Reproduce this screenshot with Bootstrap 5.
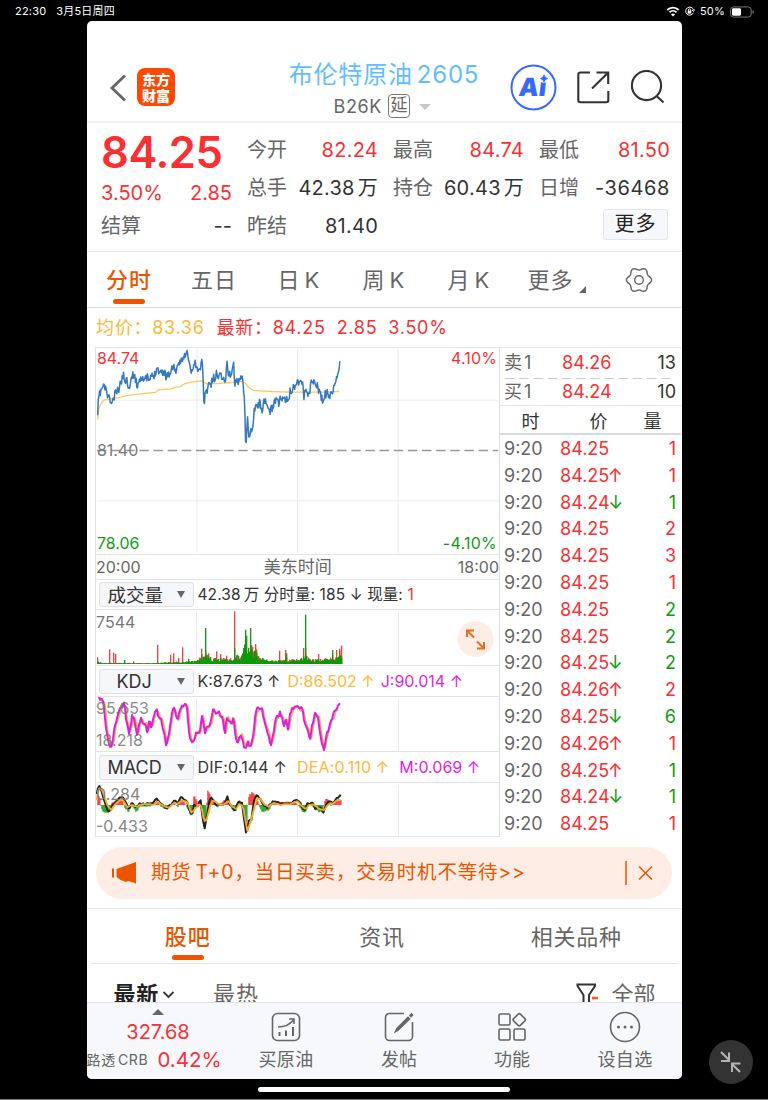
<!DOCTYPE html>
<html lang="zh-CN">
<head>
<meta charset="utf-8">
<meta name="viewport" content="width=device-width, initial-scale=1">
<title>布伦特原油2605</title>
<link href="https://cdn.jsdelivr.net/npm/bootstrap@5.3.0/dist/css/bootstrap.min.css" rel="stylesheet">
<style>
  :root{--up:#fa2f32;--down:#109c10;--org:#ec5500;--avg:#ffb739;--gr:#666;--ln:#e3e4e9}
  body{background:#000;font-family:Inter,"Noto Sans CJK SC",sans-serif;color:#333;height:1100px;overflow:hidden;line-height:1.2;border-bottom:1px solid #777}
  svg{display:block;flex:none}
  .up{color:var(--up)}.down{color:var(--down)}.gr{color:var(--gr)}.avg{color:var(--avg)}.mag{color:#e11fe1}.org{color:var(--org)}
  .status-row{height:21px;font-size:11px;color:#fff;padding:2px 14px 0 15px}
  .phone{width:595px;height:1058px;margin-left:86.5px;background:#fff;border-radius:5px;overflow:hidden}
  .top-bar{height:102px;padding-top:30px;border-bottom:2px solid #f1f1f2;display:grid;grid-template-columns:185px 1fr 185px}
  .app-logo{width:38px;height:38px;border-radius:8px;background:#ff4800;color:#fff;font:900 14px/16px "Noto Sans CJK SC",sans-serif;text-align:center;padding-top:3px}
  .title{font-size:24px;line-height:30px;color:#62bdff;letter-spacing:.8px;white-space:nowrap}
  .delay{width:22px;height:24px;border:1px solid #777;border-radius:4px;font-size:17px;line-height:21px;text-align:center}
  .tri{width:0;height:0;border:6px solid transparent;border-top-color:#c8c8c8;border-bottom:0}
  .quote{height:129px;padding:8px 12px 0 14.5px;border-bottom:1px solid var(--ln);display:grid;grid-template-columns:repeat(4,131px);column-gap:15px;grid-template-rows:repeat(3,38px);font-size:20px}
  .quote>div{display:flex;justify-content:space-between;align-items:center;white-space:nowrap}
  .quote .figs{letter-spacing:.25px}
  .quote .big{font-size:43.5px;font-weight:600;letter-spacing:-.45px;padding-top:5px}
  .more-btn{width:65px;height:31px;margin:-4px 2px 0 0;border:1px solid #e3e5ea;border-radius:3px;background:#f7f8fb;padding:0;font-size:20px;line-height:28px;color:#222;letter-spacing:1px}
  .tabs{height:56px;border-bottom:1px solid #dcdde4;font-size:22px;letter-spacing:1px}
  .tabs>div{width:85px;text-align:center;line-height:56px;height:56px;position:relative}
  .on{color:var(--org);font-weight:500}
  .on::after{content:"";position:absolute;left:50%;margin-left:-16px;width:32px;height:5px;border-radius:3px;background:var(--org);bottom:4px}
  .board .on::after{bottom:3px}
  .legend-row{height:39px;padding-left:9.5px;font-size:18px;letter-spacing:.72px;white-space:pre}
  .market{margin-left:8.5px;height:490px}
  .lcol{width:404px;border-left:1px solid var(--ln);border-top:1px solid var(--ln)}
  .lcol>*{border-bottom:1px solid var(--ln)}
  .lcol svg text{font-size:16px}
  .pick{width:95px;height:25px;border:1px solid #dfe1e7;border-radius:3px;background:#f6f7fa;font-size:18px;margin-left:2.5px;padding:0 8px;color:#333}
  .pick span{padding-top:2px}
  .pick i{width:0;height:0;border:4.5px solid transparent;border-top:7px solid #666;border-bottom:0}
  .ind{font-size:16px;white-space:pre;padding-top:2px}
  .rcol{width:182px;border-left:1px solid #dcdee5;border-top:1px solid var(--ln);font-size:18px}
  .tick{height:26.8px;display:grid;grid-template-columns:56px 78px 1fr;align-items:center;padding:1px 5px 0 4px;white-space:nowrap}
  .tick>:last-child,.lvl>:last-child{text-align:right}
  .lvl{height:30px;display:grid;grid-template-columns:58px 78px 1fr;align-items:center;padding:0 5px 0 4px}
  .banner{margin:10px 10px 9px 9.5px;height:52px;border-radius:26px;background:#feede5;color:var(--org);font-size:19.5px;letter-spacing:.8px;padding:0 18px 0 16px;white-space:nowrap}
  .board{margin:0 4px;height:55px;border-bottom:1px solid var(--ln);font-size:22px;letter-spacing:.8px}
  .board>div{flex:1;text-align:center;line-height:57px;position:relative}
  .sort-row{height:38px;overflow:hidden;padding:13px 26px 0 27px;font-size:22px;line-height:34px}
  .foot{height:78px;background:#f7f8fb;border-top:1px solid #e1e2e8;font-size:18px;color:#666}
  .foot>div{width:113px;text-align:center;white-space:nowrap}
  .home{width:252px;height:5px;border-radius:3px;background:#fff;margin:8px 0 0 258px}
  .shrink{position:absolute;left:709px;top:1040px}
</style>
</head>
<body>
<div class="status-row d-flex justify-content-between align-items-center">
  <div style="letter-spacing:.2px">22:30 &nbsp; 3月5日周四</div>
  <div class="d-flex align-items-center">
    <svg width="14" height="11" viewBox="0 0 14 11" fill="none" stroke="#fff" stroke-width="1.8"><path d="M1.3 4a8.2 8.2 0 0 1 11.4 0M3.5 6.3a5 5 0 0 1 7 0"/><path d="M7 10.5 5 8.5a2.8 2.8 0 0 1 4 0z" fill="#fff" stroke="none"/></svg>
    <svg class="ms-1" width="11" height="11" viewBox="0 0 11 11" fill="none" stroke="#fff"><path d="M9.3 6.8A4 4 0 1 1 9.5 4M10.6 3.5 9.4 5.5 7.9 4"/><rect x="3.7" y="4.8" width="3.6" height="2.8" fill="#fff" stroke="none"/><path d="M4.4 5V4a1.1 1.1 0 0 1 2.2 0v1"/></svg>
    <span style="margin:0 5px 0 5px;letter-spacing:.2px">50%</span>
    <svg width="24" height="12" viewBox="0 0 24 12"><rect x=".6" y=".9" width="20.6" height="10.2" rx="3" fill="none" stroke="#777"/><rect x="2" y="2.3" width="9" height="7.4" rx="1.4" fill="#fff"/><path d="M22.5 4v4q1.3-.6 1.3-2t-1.3-2" fill="#777"/></svg>
  </div>
</div>

<main class="phone">
  <header class="top-bar">
    <div class="d-flex align-items-center" style="padding-left:22px">
      <svg style="margin-top:3px" width="18" height="30" viewBox="0 0 18 30" fill="none" stroke="#666" stroke-width="2.8"><path d="M16 2.500 3 15l13 12.500"/></svg>
      <div class="app-logo ms-auto" style="margin-right:96.500px;margin-top:1px">东方<br>财富</div>
    </div>
    <div class="text-center" style="padding-top:9px">
      <div class="title">布伦特原油<span class="ms-1">2605</span></div>
      <div class="d-flex align-items-center gr" style="font-size:18px;padding:4px 0 0 62px"><span style="letter-spacing:.6px;padding-top:2px">B26K</span><span class="delay" style="margin-left:6px">延</span><i class="tri" style="margin-left:9px;margin-top:2px"></i></div>
    </div>
    <div class="d-flex align-items-center" style="padding:2px 0 0 13px">
      <svg width="47" height="47" viewBox="0 0 47 47"><circle cx="23.5" cy="23.5" r="22" fill="none" stroke="#3768ff" stroke-width="2"/><g transform="skewX(-7)"><text x="12 32" y="32.500" font-size="25" font-weight="900" fill="#3768ff">Ai</text></g><circle cx="34" cy="14" r="4.800" fill="#fff"/><path d="m34 10.800 1.200 2.500 2.500 1.200-2.500 1.200-1.200 2.500-1.200-2.500-2.500-1.200 2.500-1.200z" fill="#3768ff" stroke="#3768ff" stroke-width=".8"/></svg>
      <svg style="margin-left:19.500px" width="34" height="34" viewBox="0 0 34 34" fill="none" stroke="#333" stroke-width="2.1"><path d="M14 2.5H4.300a2 2 0 0 0-2 2v25.700a2 2 0 0 0 2 2h26a2 2 0 0 0 2-2V21M20.500 2.500h11.700v11.500M32 2.700 16 18.500"/></svg>
      <svg style="margin-left:20px" width="36" height="34" viewBox="0 0 36 34" fill="none" stroke="#333" stroke-width="2.1"><circle cx="16.500" cy="15.500" r="14.600"/><path d="m26.500 26 7 6.500"/></svg>
    </div>
  </header>

  <section class="quote">
    <div class="up big">84.25</div><div><span class="gr">今开</span><span class="up figs">82.24</span></div><div><span class="gr">最高</span><span class="up figs">84.74</span></div><div><span class="gr">最低</span><span class="up figs">81.50</span></div>
    <div class="up" style="padding-top:9px"><span>3.50%</span><span>2.85</span></div><div><span class="gr">总手</span><span class="figs">42.38<span style="margin-left:3px">万</span></span></div><div><span class="gr">持仓</span><span class="figs">60.43<span style="margin-left:3px">万</span></span></div><div><span class="gr">日增</span><span class="figs" style="letter-spacing:.6px">-36468</span></div>
    <div><span class="gr">结算</span><span>--</span></div><div><span class="gr">昨结</span><span class="figs">81.40</span></div><div></div><div><button class="btn more-btn ms-auto">更多</button></div>
  </section>

  <nav class="tabs d-flex gr">
    <div class="on">分时</div><div>五日</div><div>日<span style="margin-left:4px">K</span></div><div>周<span style="margin-left:4px">K</span></div><div>月<span style="margin-left:4px">K</span></div>
    <div class="d-flex align-items-center justify-content-center" style="padding-left:5px">更多<svg style="margin:18px 0 0 5px" width="7" height="7"><path d="M7 0v7H0z" fill="#666"/></svg></div>
    <div class="d-flex align-items-center justify-content-center"><svg width="28" height="28" viewBox="-14 -14 28 28" fill="none" stroke="#666" stroke-width="1.400"><path id="gear"/><circle r="4.300"/></svg></div>
  </nav>

  <div class="legend-row d-flex align-items-center"><span class="avg">均价：83.36</span><span class="up" style="margin-left:12px">最新：84.25</span><span class="up" style="margin-left:11px">2.85</span><span class="up" style="margin-left:11px">3.50%</span></div>

  <section class="market d-flex">
    <div class="lcol">
      <svg width="403" height="207" viewBox="0 1 403 207">
        <path d="M100.500 2v205M201.500 2v205M302.500 2v205M0 53.500h403M0 154.500h403" stroke="#eaebf0" fill="none"/>
        <path d="M0 104h403" stroke="#999" stroke-dasharray="9.500 4.700" stroke-width="1.300"/>
        <g transform="translate(-6 -7) scale(.33333)" fill="none" stroke-linejoin="round"><path id="avgLine" stroke="#ffc95a" stroke-width="4"/><path id="priceLine" stroke="#3478c0" stroke-width="4.500"/></g>
        <text x="0" y="17" fill="#fa2f32">84.74</text><text x="402" y="17" text-anchor="end" fill="#fa2f32" letter-spacing=".2">4.10%</text>
        <text x="0" y="109.500" fill="#777">81.40</text>
        <text x="0" y="203" fill="#109c10">78.06</text><text x="402" y="203" text-anchor="end" fill="#109c10" letter-spacing=".3">-4.10%</text>
      </svg>
      <div class="d-flex justify-content-between align-items-center gr" style="height:25px;font-size:16px;padding-top:1px"><span>20:00</span><span style="font-size:17px;margin-right:3px">美东时间</span><span>18:00</span></div>
      <div class="d-flex align-items-center" style="height:30px"><div class="pick d-flex align-items-center justify-content-between"><span style="font-size:18.500px">成交量</span><i></i></div><span class="ind" style="margin-left:4px;font-size:15.500px;letter-spacing:.1px">42.38<span style="margin-left:3px">万</span> 分时量: 185 ↓ 现量: <span class="up">1</span></span></div>
      <svg width="403" height="56" viewBox="0 0 403 55">
        <path d="M100.500 2v52M201.500 2v52M302.500 2v52" stroke="#eaebf0"/>
        <text x="0" y="17.500" fill="#777">7544</text>
        <g id="vol" transform="translate(-10 -80) scale(.33333)"></g>
        <circle cx="379.500" cy="29" r="18" fill="#feede5"/><path d="m378 27-7-7m0 6.500V20h7m3 11 7 7m0-6.500V38h-7" transform="translate(0 .500)" fill="none" stroke="#ec6a20" stroke-width="2"/>
      </svg>
      <div class="d-flex align-items-center" style="height:31px"><div class="pick d-flex align-items-center justify-content-between"><span style="margin-left:9px">KDJ</span><i></i></div><span class="ind" style="margin-left:4px">K:87.673 ↑</span><span class="ind avg" style="margin-left:7px">D:86.502 ↑</span><span class="ind mag" style="margin-left:6px">J:90.014 ↑</span></div>
      <svg width="403" height="55" viewBox="0 0 403 54">
        <path d="M100.500 2v52M201.500 2v52M302.500 2v52" stroke="#eaebf0"/>
        <g transform="translate(-6 -17) scale(.33333)" fill="none" stroke-linejoin="round"><path id="dLine" stroke="#f5b04a" stroke-width="5"/><path id="jLine" stroke="#dd20df" stroke-width="6"/></g>
        <g opacity=".85"><text x="0" y="17" fill="#777">95.653</text><text x="0" y="49" fill="#777">18.218</text></g>
      </svg>
      <div class="d-flex align-items-center" style="height:31px"><div class="pick d-flex align-items-center justify-content-between"><span>MACD</span><i></i></div><span class="ind" style="margin-left:4px;letter-spacing:.15px">DIF:0.144 ↑</span><span class="ind avg" style="margin-left:10px;letter-spacing:.15px">DEA:0.110 ↑</span><span class="ind mag" style="margin-left:10px">M:0.069 ↑</span></div>
      <svg width="403" height="54" viewBox="0 0 403 53">
        <path d="M100.500 2v52M201.500 2v52M302.500 2v52" stroke="#eaebf0"/>
        <g transform="translate(-6 -103) scale(.33333)" fill="none" stroke-linejoin="round"><g id="macd"></g><path id="difLine" stroke="#222" stroke-width="6"/><path id="deaLine" stroke="#f5a92e" stroke-width="5.500"/></g>
        <g opacity=".9"><text x="0" y="17" fill="#777">0.284</text><text x="0" y="49" fill="#777">-0.433</text></g>
      </svg>
    </div>
    <div class="rcol">
      <div class="lvl"><span class="gr">卖<span style="margin-left:2px">1</span></span><span class="up">84.26</span><span>13</span></div>
      <svg width="182" height="1"><path d="M5 .5h168" stroke="#c9cbd2" stroke-width="1" stroke-dasharray="9.500 4.700"/></svg>
      <div class="lvl" style="height:27px;border-bottom:1px solid #e3e4e9"><span class="gr">买<span style="margin-left:2px">1</span></span><span class="up">84.24</span><span>10</span></div>
      <div class="d-flex align-items-center" style="height:29px;border-bottom:2px solid #d9dbe3;padding-left:21.500px;padding-top:5px"><span>时</span><span style="margin-left:50px">价</span><span style="margin-left:36px">量</span></div>
      <div id="ticks"></div>
    </div>
  </section>

  <div class="banner d-flex align-items-center">
    <svg width="25" height="22" viewBox="0 0 25 22" fill="#ec5500"><path d="M0 6.500h2v9H0zM4.500 7 24 0v22l-1-1-7-2-2 1-5.500-2-4-3z"/></svg>
    <span style="margin-left:14px">期货<span style="margin-left:4px">T+0</span>，当日买卖，交易时机不等待&gt;&gt;</span>
    <svg class="ms-auto" width="29" height="24" viewBox="0 0 29 24" stroke="#ec5500" fill="none" stroke-width="1.500"><path d="M1 0v24M14 5.500l13 13M27 5.500l-13 13"/></svg>
  </div>
  <div style="height:1px;background:#e6e7eb"></div>
  <nav class="board d-flex gr"><div class="on">股吧</div><div>资讯</div><div style="padding-right:4px">相关品种</div></nav>
  <div class="sort-row d-flex"><b style="font-weight:700;color:#222;letter-spacing:.7px">最新</b><svg style="margin:13px 0 0 3px" width="13" height="10" fill="none" stroke="#333" stroke-width="1.800"><path d="m1.500 2 5 5 5-5"/></svg><span class="gr" style="margin-left:38px;letter-spacing:1px">最热</span>
    <svg class="ms-auto" style="margin-top:5px" width="24" height="22" viewBox="0 0 24 22" fill="none" stroke="#333" stroke-width="2"><path d="M8.500 21v-8L2.500 4V2.500h17.500V4l-6 9v8"/><path d="M17 16h6" stroke="#ff5a1e" stroke-width="2.600"/></svg><span class="gr" style="margin-left:12px">全部</span></div>

  <footer class="foot d-flex">
    <div style="width:143px"><svg class="mx-auto" style="margin-top:6px" width="12" height="6"><path d="M0 6 6 0l6 6z" fill="#666"/></svg>
      <div class="up" style="font-size:20px;line-height:24px;margin-top:5px">327.68</div>
      <div class="d-flex align-items-center" style="line-height:31px"><span style="font-size:14px;letter-spacing:.7px">路透<span style="margin-left:2px">CRB</span></span><span class="up" style="font-size:20.500px;margin-left:9px">0.42%</span></div></div>
    <div><svg class="mx-auto" style="margin-top:9px" width="30" height="30" viewBox="0 0 30 30" fill="none" stroke="#666" stroke-width="1.600"><rect x="1.500" y="1.500" width="27" height="27" rx="5"/><path d="M7 15q10 0 15.500-7M18 7h5v5" stroke-width="1.500"/><path d="M8.500 20v4M15 18.500V24M22 15v9" stroke-width="2"/></svg><div style="line-height:36px;letter-spacing:.3px">买原油</div></div>
    <div><svg class="mx-auto" style="margin-top:9px" width="30" height="30" viewBox="0 0 30 30" fill="none" stroke="#666" stroke-width="1.600"><path d="M20 1.500H5.500a4 4 0 0 0-4 4v19a4 4 0 0 0 4 4h19a4 4 0 0 0 4-4V10"/><path d="m11.500 19.500 1.500-3L24 5.500l1.500 1.500L14 18zM26 3.500l1.500-1.500 1 1L27 4.500z" fill="#666"/></svg><div style="line-height:36px">发帖</div></div>
    <div><svg class="mx-auto" style="margin-top:9px" width="30" height="30" viewBox="0 0 30 30" fill="none" stroke="#666" stroke-width="1.600"><rect x="2" y="2" width="11" height="11" rx="1.500"/><rect x="2" y="17" width="11" height="11" rx="1.500"/><rect x="17" y="17" width="11" height="11" rx="1.500"/><rect x="17.500" y="3" width="9.500" height="9.500" rx="1.500" transform="rotate(45 22.250 7.750)"/></svg><div style="line-height:36px">功能</div></div>
    <div><svg class="mx-auto" style="margin-top:8px" width="32" height="32" viewBox="0 0 32 32" fill="none" stroke="#666" stroke-width="1.600"><circle cx="16" cy="16" r="14.500"/><g fill="#666" stroke="none"><circle cx="9.500" cy="16" r="1.500"/><circle cx="16" cy="16" r="1.500"/><circle cx="22.500" cy="16" r="1.500"/></g></svg><div style="line-height:34px;letter-spacing:.3px">设自选</div></div>
  </footer>
</main>
<div class="home"></div>
<svg class="shrink" width="44" height="44" viewBox="0 0 44 44" fill="none" stroke="#b4b4b4" stroke-width="2"><circle cx="22" cy="22" r="22" fill="#333" stroke="none"/><path d="m12 12 8 8m0-7.500V21h-8M31 32l-8-8m0 8v-8.500h8.500"/></svg>

<script src="https://cdn.jsdelivr.net/npm/bootstrap@5.3.0/dist/js/bootstrap.bundle.min.js"></script>
<script>
const $ = id => document.getElementById(id);
let seed = 11;
const rnd = () => (seed = (seed * 16807) % 2147483647) / 2147483647;
const parse = s => s.trim().split(/\s+/).map(p => p.split(',').map(Number));
// value of a polyline at x
function at(pts, x){
  for (let i = 1; i < pts.length; i++) if (x <= pts[i][0]) {
    const [a, b] = pts[i-1], [c, d] = pts[i];
    return b + (d - b) * (x - a) / ((c - a) || 1);
  }
  return pts[pts.length-1][1];
}
function trace(id, pts, amp, step){
  let d = '';
  const x0 = pts[0][0], x1 = pts[pts.length-1][0];
  for (let x = x0; x <= x1; x += step) d += (d ? 'L' : 'M') + x.toFixed(1) + ' ' + (at(pts, x) + (rnd() - .5) * 2 * amp).toFixed(1);
  $(id).setAttribute('d', d);
}
const price = parse(`20,240 22,180 30,150 38,138 46,152 52,172 62,190 68,180 74,158 82,154 90,128 96,105 102,118 108,122 114,138 122,118 130,98 138,138 146,118 154,108 162,124 170,112 176,124 184,108 192,105 198,78 204,92 212,98 218,92 226,108 234,100 240,102 248,74 254,92 262,88 268,66 276,52 284,48 290,38 296,68 303,105 308,78 314,68 320,92 326,95 332,70 336,64 338,110 341,215 344,165 350,150 354,128 362,136 368,112 374,122 380,95 386,112 392,100 398,118 404,125 410,75 414,95 420,110 424,92 430,75 434,135 440,120 446,128 452,100 456,118 462,165 466,300 468,300 472,235 476,300 478,303 482,260 486,268 492,210 498,190 504,198 510,188 516,208 522,190 530,192 538,220 546,205 554,182 560,178 566,188 572,174 580,185 586,180 594,186 600,155 608,148 616,132 624,124 632,122 638,132 642,172 648,145 656,168 664,130 672,122 680,135 688,155 696,178 700,188 706,165 712,160 718,178 724,158 730,150 736,118 742,122 748,100 750,74`);
trace('priceLine', price, 13, 2);
trace('avgLine', parse(`20,240 24,205 32,188 42,180 60,177 90,172 110,167 150,162 195,158 202,150 240,148 252,143 270,140 282,132 300,127 335,123 350,133 380,131 410,129 455,125 465,130 475,142 490,152 540,155 600,157 700,157 750,155`), 0, 4);
const kdj = parse(`24,52 32,58 40,62 44,95 48,150 54,175 62,207 68,190 74,135 80,120 90,80 98,75 104,72 108,115 116,160 122,140 126,110 132,115 138,148 142,165 148,125 154,115 160,140 166,125 172,158 178,118 184,145 190,110 200,88 206,108 214,118 220,150 228,195 236,170 242,120 250,80 254,90 262,125 270,85 278,75 290,72 294,120 300,180 306,190 314,170 320,155 328,165 336,105 344,160 350,145 362,132 368,90 376,98 386,95 392,115 398,108 404,168 410,108 418,125 424,135 430,110 436,170 444,185 452,160 460,195 468,205 474,190 482,203 490,165 496,100 504,84 516,86 520,112 526,140 534,160 542,198 550,165 556,120 562,108 570,100 576,115 582,135 588,118 594,148 600,105 608,85 614,80 620,72 626,90 636,85 642,120 648,140 654,150 660,180 666,140 674,100 684,110 690,160 696,195 702,208 710,165 716,145 722,120 728,115 734,90 742,85 750,68`);
trace('jLine', kdj, 6, 3);
trace('dLine', kdj.map(([x, y]) => [x + 4, 130 + (y - 130) * .93]).filter(p => p[0] < 752), 1, 3);
const dif = parse(`20,345 26,310 34,332 42,360 50,385 58,395 68,375 78,365 88,355 98,350 108,370 118,388 126,368 138,384 150,370 165,372 185,372 200,358 212,372 230,385 246,370 256,360 264,372 272,350 290,362 300,395 306,408 312,372 320,378 332,362 338,415 344,445 350,410 358,362 366,352 376,372 390,375 402,376 412,350 420,372 434,392 446,365 456,370 464,430 469,465 476,425 484,420 492,365 500,345 510,355 520,372 532,384 542,370 556,362 568,372 588,370 602,372 620,358 632,372 642,394 652,372 668,368 676,385 690,382 700,396 710,370 722,362 730,368 740,356 752,345`);
const dea = parse(`20,360 26,322 36,330 44,352 54,380 64,390 76,372 90,360 100,362 112,382 126,375 140,380 156,372 190,374 204,366 220,378 236,384 252,368 262,372 276,362 292,366 304,398 314,388 324,374 334,376 342,425 350,418 360,380 370,360 384,372 402,374 414,362 426,378 438,388 448,372 458,376 466,420 472,452 480,430 490,395 500,355 510,356 524,374 536,380 550,368 570,374 600,373 622,363 636,378 646,388 658,374 672,374 684,384 702,392 714,374 730,370 742,360 752,360`);
trace('difLine', dif, 3, 4); trace('deaLine', dea, 1, 4);
let m = '';
const hist = parse(`22,-30 28,-20 32,10 44,25 58,14 64,-5 76,-12 96,-18 102,8 114,20 122,-5 128,8 138,20 148,4 180,4 200,-14 210,5 230,10 246,-10 262,6 270,-16 284,-5 294,18 306,32 309,-26 318,-16 322,6 328,-8 334,25 343,76 348,10 351,-40 358,-26 366,-12 380,8 410,-22 422,8 434,22 446,-16 452,-5 460,20 466,60 470,50 473,-24 480,-28 488,-40 496,-28 504,-5 512,16 524,18 536,14 548,-10 560,-8 590,-8 610,-10 626,4 644,26 654,-5 668,5 676,16 696,20 704,-16 712,-16 722,4 734,-12 752,-14`);
for (let x = 22; x < 752; x += 3) {
  const v = at(hist, x) * (.9 + rnd() * .35), h = Math.abs(v).toFixed(1);
  m += `<rect x="${x}" y="${v < 0 ? (375 - h) : 375}" width="3.4" height="${h}" fill="${v < 0 ? '#f92020' : '#08980a'}"/>`;
}
$('macd').innerHTML = m;
// volume: red bars behind, green bars in front
const spikes = {33:[20,0],69:[44,0],81:[34,0],87:[30,0],114:[0,12],141:[8,0],213:[57,0],252:[28,0],261:[32,0],276:[18,0],288:[50,0],306:[8,16],357:[40,108],345:[46,30],390:[38,8],402:[30,18],420:[25,15],444:[158,48],477:[70,103],480:[40,85],492:[50,108],507:[60,30],510:[44,35],579:[40,12],597:[42,15],600:[20,32],651:[48,20],657:[50,148],696:[30,15],738:[28,42],750:[42,20],759:[46,40],765:[55,15]};
const base = parse(`33,8 45,3 200,2 240,5 330,8 345,20 360,32 375,14 400,14 440,15 447,26 462,16 475,52 488,48 500,42 515,22 535,12 570,10 640,12 655,28 675,12 700,12 735,16 767,24`);
let v = '';
for (let x = 33; x <= 765; x += 3) {
  const b = at(base, x), s = spikes[x] || [0, 0];
  const r = Math.max(s[0], b * (.3 + rnd())), g = Math.max(s[1], b * (.5 + rnd() * .7));
  v += `<rect x="${x}" y="${(402-r).toFixed(1)}" width="4" height="${r.toFixed(1)}" fill="#f04040"/><rect x="${x}" y="${(402-g).toFixed(1)}" width="4" height="${g.toFixed(1)}" fill="#0a9a0a"/>`;
}
$('vol').innerHTML = v;
// tick list: price, arrow, volume, side
$('ticks').innerHTML = `84.25,,1,u 84.25,↑,1,u 84.24,↓,1,d 84.25,,2,u 84.25,,3,u 84.25,,1,u 84.25,,2,d 84.25,,2,d 84.25,↓,2,d 84.26,↑,2,u 84.25,↓,6,d 84.26,↑,1,u 84.25,↑,1,d 84.24,↓,1,d 84.25,,1,u`
  .split(' ').map(r => { const [p, a, n, c] = r.split(','); return `<div class="tick"><span class="gr">9:20</span><span class="up">${p}<span class="${a === '↓' ? 'down' : 'up'}" style="margin-left:-1.5px">${a}</span></span><span class="${c === 'u' ? 'up' : 'down'}">${n}</span></div>`; }).join('');
// settings icon outline
let g = '';
for (let i = 0; i < 72; i++) { const t = i * Math.PI / 36, r = 11.3 + 1.3 * Math.cos(6 * t); g += (i ? 'L' : 'M') + (r * Math.cos(t)).toFixed(2) + ' ' + (r * Math.sin(t)).toFixed(2); }
$('gear').setAttribute('d', g + 'z');
</script>
</body>
</html>
